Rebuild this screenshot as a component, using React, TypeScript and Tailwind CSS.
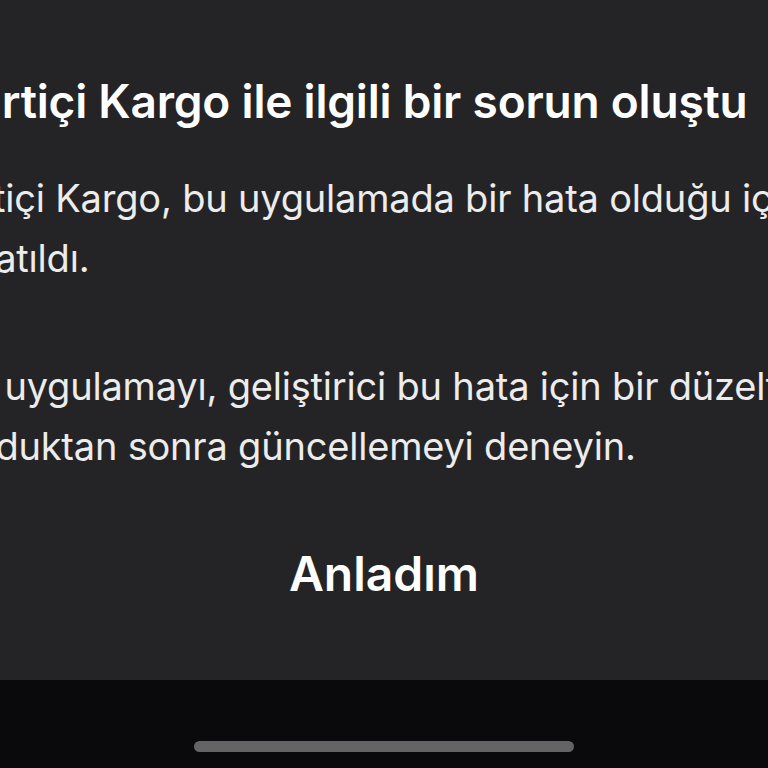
export default function App() {
  const font = { fontFamily: "Inter, 'Noto Sans', sans-serif" };
  return (
    <div className="flex h-[768px] w-[768px] flex-col overflow-hidden bg-[#0a0a0d]" style={font}>
      <div className="flex h-[680px] flex-col bg-[#242426]">
        <div className="ml-[-56px] w-[1000px] whitespace-nowrap pt-[73px] text-white">
          <h1 className="ml-[-1px] text-[46px] font-semibold leading-[56px] tracking-[-0.2px]">
            Yurtiçi Kargo ile ilgili bir sorun oluştu
          </h1>
          <div className="mt-[39px] text-[38px] leading-[60px] tracking-[-0.2px] text-[#ececec]">
            <p className="ml-[-12px]">Yurtiçi Kargo, bu uygulamada bir hata olduğu için</p>
            <p className="ml-[-14px]">kapatıldı.</p>
            <p className="mt-[68px] ml-[3px]">Bu uygulamayı, geliştirici bu hata için bir düzeltme</p>
            <p className="ml-[-13px]">sunduktan sonra güncellemeyi deneyin.</p>
          </div>
        </div>
        <div className="mt-[68px] flex justify-center">
          <button className="text-[48px] font-semibold leading-[60px] text-white">Anladım</button>
        </div>
      </div>
      <div className="flex flex-1 items-end justify-center pb-[16px]">
        <div className="h-[11px] w-[380px] rounded-full bg-[#646464]" />
      </div>
    </div>
  );
}
